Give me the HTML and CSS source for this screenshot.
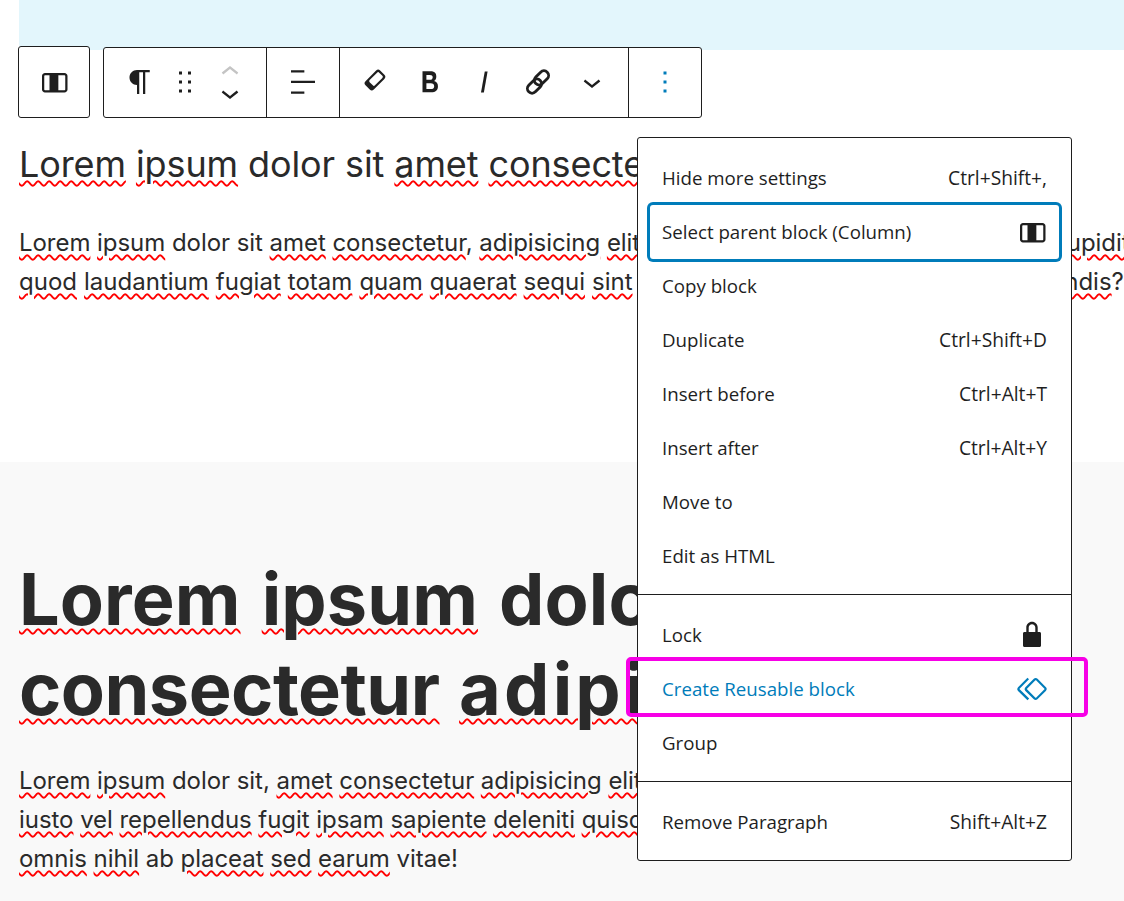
FILE: index.html
```html
<!DOCTYPE html>
<html lang="en">
<head>
<meta charset="utf-8">
<title>Block editor</title>
<link rel="stylesheet" href="styles.css">
</head>
<body>
<div class="page">
  <div class="band"></div>
  <div class="toolbar-row">
    <div class="tool-box parent-box">
      <svg class="ico" viewBox="0 0 24 24"><path d="M19 6H6c-1.1 0-2 .9-2 2v9c0 1.1.9 2 2 2h13c1.100 0 2-.9 2-2V8c0-1.100-.9-2-2-2zM5.500 17V8c0-.3.2-.5.500-.5h3v10H6c-.3 0-.5-.2-.5-.5zm14 0c0 .3-.2.5-.5.5h-4.100v-10H19c.3 0 .5.2.5.5v9z"/></svg>
    </div>
    <div class="tool-box main-box">
      <div class="group group-block">
        <svg class="ico" viewBox="0 0 24 24"><path d="m9.996 14v-.225l.004.000v6.225h1.500v-14.500h2.500v14.500h1.500v-14.500h3v-1.500h-8.504c-2.761 0-5 2.239-5 5 0 2.761 2.239 5 5 5z"/></svg>
        <svg class="ico" viewBox="0 0 24 24"><path d="M8 7h2V5H8v2zm0 6h2v-2H8v2zm0 6h2v-2H8v2zm6-14v2h2V5h-2zm0 8h2v-2h-2v2zm0 6h2v-2h-2v2z"/></svg>
        <div class="mover">
          <svg class="chev chev-off" viewBox="0 4 24 16"><path d="M6.500 12.400L12 8l5.500 4.400-.9 1.200L12 10l-4.500 3.600-1-1.200z"/></svg>
          <svg class="chev" viewBox="0 4 24 16"><path d="M17.500 11.600L12 16l-5.500-4.400.9-1.200L12 14l4.500-3.600 1 1.200z"/></svg>
        </div>
      </div>
      <div class="group group-single">
        <svg class="ico" viewBox="0 0 24 24"><path d="M4 19.800h8.900v-1.500H4v1.500zm8.900-15.600H4v1.500h8.900V4.200zm-8.900 7v1.500h16v-1.500H4z"/></svg>
      </div>
      <div class="group group-format">
        <svg class="ico" viewBox="0 0 24 24"><g transform="rotate(-45 11.300 10.700)"><rect x="4.400" y="6.800" width="13.800" height="7.800" rx="1.900" fill="#1e1e1e"/><rect x="7.800" y="8.200" width="9" height="5" rx="1" fill="#fff"/></g></svg>
        <svg class="ico" viewBox="0 0 24 24"><path d="M14.700 11.300c1-.6 1.500-1.600 1.500-3 0-2.300-1.300-3.400-4-3.400H7v14h5.800c1.400 0 2.500-.3 3.300-1 .8-.7 1.200-1.700 1.200-2.900.1-1.900-.8-3.100-2.600-3.700zm-5.100-4h2.300c.6 0 1.100.1 1.400.4.3.3.5.7.5 1.200s-.2 1-.5 1.200c-.3.3-.8.4-1.400.4H9.600V7.300zm4.600 9c-.4.3-1 .4-1.700.4H9.600v-3.900h2.900c.7 0 1.300.2 1.700.5.4.3.6.8.6 1.500s-.2 1.200-.6 1.500z"/></svg>
        <svg class="ico" viewBox="0 0 24 24"><path d="M12.500 5L10 19h1.900l2.500-14z"/></svg>
        <svg class="ico" viewBox="0 0 24 24"><g class="chain" transform="rotate(-45 12 12)"><rect x="3" y="9.200" width="10.800" height="6.200" rx="3.100"/><rect x="10.200" y="8.600" width="10.800" height="6.200" rx="3.100"/></g></svg>
        <svg class="ico" viewBox="0 0 24 24"><path d="M17.500 11.600L12 16l-5.500-4.400.9-1.200L12 14l4.500-3.600 1 1.200z"/></svg>
      </div>
      <div class="group group-single">
        <svg class="ico ico-accent" viewBox="0 0 24 24"><path d="M13 19h-2v-2h2v2zm0-6h-2v-2h2v2zm0-6h-2V5h2v2z"/></svg>
      </div>
    </div>
  </div>

  <section class="intro">
    <h3 class="lead"><span class="sp">Lorem</span> <span class="sp">ipsum</span> dolor sit <span class="sp">amet</span> <span class="sp">consectetur</span> adipisicing elit</h3>
    <p class="copy"><span class="sp">Lorem</span> <span class="sp">ipsum</span> dolor sit <span class="sp">amet</span> <span class="sp">consectetur</span>, <span class="sp">adipisicing</span> <span class="sp">elit</span>. Quae natus minima eaque dolorem <span class="sp">cupiditate</span></p>
    <p class="copy copy-wide"><span class="sp">quod</span> <span class="sp">laudantium</span> <span class="sp">fugiat</span> <span class="sp">totam</span> <span class="sp">quam</span> <span class="sp">quaerat</span> <span class="sp">sequi</span> <span class="sp">sint</span> voluptas harum dicta quae sit <span class="sp">perferendis</span>?</p>
  </section>

  <section class="feature">
    <h1 class="hero hero-top"><span class="sp">Lorem</span> <span class="sp">ipsum</span> dolor sit amet</h1>
    <h1 class="hero hero-next"><span class="sp">consectetur</span> <span class="sp spread">adipisicing</span> elit</h1>
    <p class="copy copy-first"><span class="sp">Lorem</span> <span class="sp">ipsum</span> dolor sit, <span class="sp">amet</span> <span class="sp">consectetur</span> <span class="sp">adipisicing</span> <span class="sp">elit</span>. Lorem ipsum dolor</p>
    <p class="copy"><span class="sp">iusto</span> <span class="sp">vel</span> <span class="sp">repellendus</span> <span class="sp">fugit</span> <span class="sp">ipsam</span> <span class="sp">sapiente</span> <span class="sp">deleniti</span> <span class="sp">quisquam</span> dolor</p>
    <p class="copy"><span class="sp">omnis</span> <span class="sp">nihil</span> ab <span class="sp">placeat</span> <span class="sp">sed</span> <span class="sp">earum</span> vitae!</p>
  </section>

  <div class="menu">
    <div class="menu-group menu-group-first">
      <div class="item"><span>Hide more settings</span><span class="keys">Ctrl+Shift+,</span></div>
      <div class="item item-focus"><span>Select parent block (Column)</span>
        <svg class="ico" viewBox="0 0 24 24"><path d="M19 6H6c-1.100 0-2 .9-2 2v9c0 1.100.9 2 2 2h13c1.100 0 2-.9 2-2V8c0-1.100-.9-2-2-2zM5.500 17V8c0-.3.2-.5.500-.5h3v10H6c-.3 0-.5-.2-.5-.5zm14 0c0 .3-.2.5-.5.5h-4.100v-10H19c.3 0 .5.2.5.5v9z"/></svg>
      </div>
      <div class="item"><span>Copy block</span></div>
      <div class="item"><span>Duplicate</span><span class="keys">Ctrl+Shift+D</span></div>
      <div class="item"><span>Insert before</span><span class="keys">Ctrl+Alt+T</span></div>
      <div class="item"><span>Insert after</span><span class="keys">Ctrl+Alt+Y</span></div>
      <div class="item"><span>Move to</span></div>
      <div class="item"><span>Edit as HTML</span></div>
    </div>
    <div class="menu-group">
      <div class="item"><span>Lock</span>
        <svg class="ico" viewBox="0 0 24 24"><path d="M17 10h-1.200V7c0-2.100-1.700-3.800-3.800-3.800-2.100 0-3.800 1.700-3.800 3.800v3H7c-.6 0-1 .4-1 1v8c0 .6.4 1 1 1h10c.6 0 1-.4 1-1v-8c0-.6-.4-1-1-1zm-2.800 0H9.800V7c0-1.200 1-2.200 2.200-2.200s2.200 1 2.200 2.200v3z"/></svg>
      </div>
      <div class="item item-accent"><span>Create Reusable block</span>
        <svg class="ico ico-accent" viewBox="0 0 24 24"><path d="M21.300 10.800l-5.600-5.600c-.7-.7-1.800-.7-2.500 0l-5.600 5.600c-.7.7-.7 1.800 0 2.500l5.600 5.600c.3.3.8.5 1.200.5s.9-.2 1.200-.5l5.600-5.600c.8-.7.8-1.900.1-2.500zm-1 1.400l-5.600 5.600c-.1.1-.3.1-.4 0l-5.600-5.600c-.1-.1-.1-.3 0-.4l5.600-5.600s.1-.1.2-.1.1 0 .2.1l5.600 5.600c.1.1.1.3 0 .4zm-16.600-.4L10 5.500l-1-1-6.300 6.300c-.7.7-.7 1.800 0 2.500L9 19.500l1.100-1.100-6.300-6.300c-.2 0-.2-.2-.1-.3z"/></svg>
      </div>
      <div class="item"><span>Group</span></div>
    </div>
    <div class="menu-group">
      <div class="item"><span>Remove Paragraph</span><span class="keys">Shift+Alt+Z</span></div>
    </div>
  </div>
  <div class="callout"></div>
</div>
</body>
</html>
```
FILE: styles.css
```css
* { box-sizing: border-box; }
html, body { margin: 0; padding: 0; }
body { background: #fff; color: #1e1e1e; font-family: "Inter", "Liberation Sans", sans-serif; }
.page { position: relative; width: 1124px; height: 901px; overflow: hidden; }

.band { height: 50px; margin-left: 19px; background: #e3f6fc; border-bottom-left-radius: 6px; }

.toolbar-row { display: flex; align-items: flex-start; gap: 13px; margin: -4px 0 0 18px; position: relative; }
.tool-box { background: #fff; border: 1.5px solid #1e1e1e; border-radius: 3px; display: flex; }
.parent-box { width: 72px; height: 72px; align-items: center; justify-content: center; }
.main-box { width: 599px; height: 71px; margin-top: 1px; }
.group { display: flex; align-items: center; height: 100%; padding-bottom: 1px; }
.group + .group { border-left: 1.5px solid #1e1e1e; }
.group-block { width: 162px; padding-left: 18px; gap: 9px; }
.group-single { width: 73px; justify-content: center; }
.group-format { width: 289px; padding-left: 18px; gap: 18px; }

.ico { width: 36px; height: 36px; flex: none; fill: #1e1e1e; display: block; }
.ico-accent { fill: #007cba; }
.chain rect { fill: none; stroke: #1e1e1e; stroke-width: 1.9px; }
.mover { display: flex; flex-direction: column; gap: 0; width: 36px; }
.chev { width: 36px; height: 24px; fill: #1e1e1e; display: block; }
.chev + .chev { margin-top: -3px; }
.chev-off { fill: #c4c4c4; }

.intro { padding: 19px 0 0 19px; height: 344px; }
.lead { margin: 0; font-size: 36px; font-weight: 400; line-height: 54px; white-space: nowrap; letter-spacing: -.1px; color: #2a2a2a; }
.copy { margin: 0; font-size: 24px; line-height: 39px; white-space: nowrap; letter-spacing: -.05px; color: #2a2a2a; }
.copy-wide { letter-spacing: 0; word-spacing: .3px; }
.lead + .copy { margin-top: 32px; }

.feature { background: #f9f9f9; height: 439px; padding: 92px 0 0 19px; }
.hero { margin: 0; font-size: 72px; font-weight: 700; line-height: 90px; white-space: nowrap; color: #2a2a2a; }
.hero-top { letter-spacing: .1px; word-spacing: 4px; }
.hero-next { letter-spacing: -.5px; word-spacing: 3px; }
.spread { letter-spacing: 3.2px; }
.copy-first { margin-top: 27px; }

.sp { text-decoration: underline wavy #f00; text-decoration-thickness: 2px; text-underline-offset: 3px; }

.menu { position: absolute; left: 637px; top: 137px; width: 435px; height: 724px; background: #fff; border: 1.5px solid #1e1e1e; border-radius: 3px; font-family: "Open Sans", "Noto Sans", sans-serif; font-size: 18.7px; }
.keys { font-size: 19.2px; }
.menu-group { padding: 13px 12px 11px; }
.menu-group-first { padding-top: 13px; }
.menu-group + .menu-group { border-top: 1.5px solid #1e1e1e; }
.item { height: 54px; display: flex; align-items: center; justify-content: space-between; padding: 0 12px; color: #1e1e1e; white-space: nowrap; }
.item > span { padding-bottom: 2px; }
.item .ico { margin-right: -3px; }
.item-focus { box-shadow: 0 0 0 3px #007cba; border-radius: 3px; }
.item-accent { color: #007cba; }
.callout { position: absolute; left: 626px; top: 657px; width: 462px; height: 60px; border: 4px solid #f700e6; border-radius: 5px; }
```
